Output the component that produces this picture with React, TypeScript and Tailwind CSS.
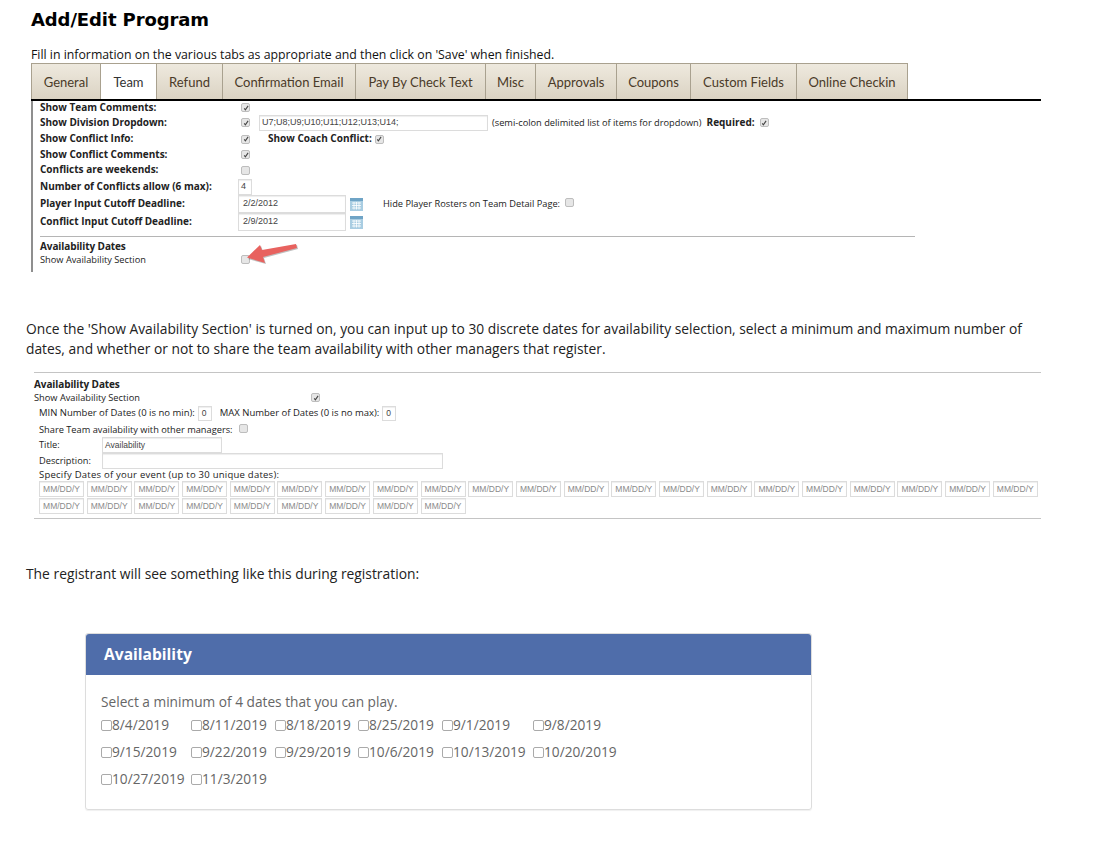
const tabs = [
  { name: "General", w: "w-[70px]" },
  { name: "Team", w: "w-[56px]", active: true },
  { name: "Refund", w: "w-[66px]" },
  { name: "Confirmation Email", w: "w-[133px]" },
  { name: "Pay By Check Text", w: "w-[130px]" },
  { name: "Misc", w: "w-[50px]" },
  { name: "Approvals", w: "w-[81px]" },
  { name: "Coupons", w: "w-[74px]" },
  { name: "Custom Fields", w: "w-[106px]" },
  { name: "Online Checkin", w: "w-[111px]" },
]

const dates = [
  ["8/4/2019", "8/11/2019", "8/18/2019", "8/25/2019", "9/1/2019", "9/8/2019"],
  ["9/15/2019", "9/22/2019", "9/29/2019", "10/6/2019", "10/13/2019", "10/20/2019"],
  ["10/27/2019", "11/3/2019"],
]

const Check = ({ on }: { on?: boolean }) => (
  <span className="inline-flex w-[9px] h-[9px] shrink-0 items-center justify-center rounded-[2px] border border-[#bdbdbd] bg-[#e6e6e6]">
    {on && (
      <svg viewBox="0 0 10 10" className="w-[6px] h-[6px]">
        <path d="M2 5.5 L4 8 L8.5 1.5" fill="none" stroke="#444" strokeWidth="1.8" />
      </svg>
    )}
  </span>
)

const Box = ({ value, className }: { value?: string; className: string }) => (
  <div className={"flex items-center border border-[#dcdcdc] shadow-[inset_0_1px_1px_#eeeeee] font-['Liberation_Sans',sans-serif] " + className}>
    {value}
  </div>
)

const Calendar = () => (
  <svg viewBox="0 0 13 13" className="w-[13px] h-[13px] ml-1 shrink-0">
    <rect width="13" height="13" fill="#a9cde2" />
    <rect x="0" y="0" width="13" height="3" fill="#6fa4c6" />
    <path d="M2 5h9M2 7.5h9M2 10h9M4 4v7.5M6.5 4v7.5M9 4v7.5" stroke="#ffffff" strokeWidth="0.8" fill="none" />
  </svg>
)

const Row = ({ label, h, children }: { label: string; h: string; children?: React.ReactNode }) => (
  <div className={"flex items-center " + h}>
    <div className="w-[201px] shrink-0 pb-[1px] font-bold text-[10px]">{label}</div>
    {children}
  </div>
)

export default function App() {
  return (
    <div className="w-[1100px] h-[846px] overflow-hidden bg-white text-black font-['Open_Sans',sans-serif]">
      {/* first screenshot: team tab */}
      <div className="pl-[31px]">
        <h1 className="pt-[8px] h-[47px] text-[18px] leading-[24px] font-bold font-['DejaVu_Sans',sans-serif] tracking-[-0.1px]">Add/Edit Program</h1>
        <p className="h-[16px] text-[12.3px] leading-[16px] text-[#111]">Fill in information on the various tabs as appropriate and then click on 'Save' when finished.</p>
        <div className="flex w-[1010px] h-[38px] border-b-2 border-black">
          {tabs.map((t) => (
            <div
              key={t.name}
              className={
                t.w +
                " flex items-center justify-center pt-[2px] border-r border-t border-[#a9a18f] font-['Lato',sans-serif] text-[13px] " +
                (t.active ? "bg-white text-[#333]" : "bg-gradient-to-b from-[#eee9de] to-[#dbd3c3] text-[#4a3a28]") +
                (t.name === "General" ? " border-l" : "")
              }
            >
              {t.name}
            </div>
          ))}
        </div>
        <div className="relative h-[171px] border-l-2 border-[#8f8f8f] pl-[7px] text-[9.25px] text-[#222]">
          <Row label="Show Team Comments:" h="h-[13px]"><Check on /></Row>
          <Row label="Show Division Dropdown:" h="h-[17px]">
            <Check on />
            <Box value="U7;U8;U9;U10;U11;U12;U13;U14;" className="ml-[9px] w-[229px] h-[16px] pl-[2px] text-[9px] text-[#444]" />
            <span className="ml-[4px]">(semi-colon delimited list of items for dropdown)</span>
            <span className="ml-[5px] font-bold text-[10px]">Required:</span>
            <span className="ml-[5px]"><Check on /></span>
          </Row>
          <Row label="Show Conflict Info:" h="h-[16px]">
            <Check on />
            <span className="ml-[18px] pb-[1px] font-bold text-[10px]">Show Coach Conflict:</span>
            <span className="ml-[3px]"><Check on /></span>
          </Row>
          <Row label="Show Conflict Comments:" h="h-[15px]"><Check on /></Row>
          <Row label="Conflicts are weekends:" h="h-[16px]"><Check /></Row>
          <Row label="Number of Conflicts allow (6 max):" h="h-[17px]">
            <Box value="4" className="-ml-[3px] w-[14px] h-[16px] pl-[2px] text-[9px] text-[#444]" />
          </Row>
          <Row label="Player Input Cutoff Deadline:" h="h-[18px]">
            <Box value="2/2/2012" className="-ml-[3px] w-[108px] h-[18px] pl-[4px] text-[9px] text-[#444]" />
            <Calendar />
            <span className="ml-[20px]">Hide Player Rosters on Team Detail Page:</span>
            <span className="ml-[5px]"><Check /></span>
          </Row>
          <Row label="Conflict Input Cutoff Deadline:" h="h-[18px]">
            <Box value="2/9/2012" className="-ml-[3px] w-[108px] h-[18px] pl-[4px] text-[9px] text-[#444]" />
            <Calendar />
          </Row>
          <div className="mt-[5px] w-[875px] border-t border-[#b5b5b5]" />
          <div className="pt-[3px] h-[16px] font-bold text-[10px] tracking-[-0.1px] leading-[12px]">Availability Dates</div>
          <div className="flex items-center h-[13px]">
            <span className="w-[201px]">Show Availability Section</span>
            <Check />
          </div>
          {/* red arrow on the checkbox */}
          <svg viewBox="0 0 60 28" className="absolute left-[207px] top-[139px] w-[60px] h-[28px]">
            <path d="M8 19 L21 6 L23 11 L57 5 L58 9 L24 18 L26 24 Z" fill="#00000040" />
            <path d="M7 17.5 L20 5 L22 10 L56 4 L57 8 L23 17 L25 23 Z" fill="#e8625f" />
          </svg>
        </div>
      </div>

      <p className="pl-[26px] pt-[47px] h-[100px] w-[1040px] text-[13.8px] leading-[20px] text-[#222]">
        Once the 'Show Availability Section' is turned on, you can input up to 30 discrete dates for availability selection, select a minimum and maximum number of dates, and whether or not to share the team availability with other managers that register.
      </p>

      {/* second screenshot: availability settings */}
      <div className="ml-[34px] w-[1007px] h-[147px] border-y border-[#c4c4c4] text-[9.25px] text-[#222]">
        <div className="pt-[5px] h-[18px] font-bold text-[10px] tracking-[-0.1px] leading-[12px]">Availability Dates</div>
        <div className="flex items-center h-[13px]">
          <span className="w-[277px]">Show Availability Section</span>
          <Check on />
        </div>
        <div className="flex items-center h-[18px] pt-[1px] pl-[5px] text-[9.5px]">
          <span>MIN Number of Dates (0 is no min):</span>
          <Box value="0" className="ml-[3px] w-[14px] h-[15px] pl-[3px] text-[8.5px] text-[#444]" />
          <span className="ml-[8px]">MAX Number of Dates (0 is no max):</span>
          <Box value="0" className="ml-[3px] w-[14px] h-[15px] pl-[3px] text-[8.5px] text-[#444]" />
        </div>
        <div className="flex items-center h-[15px] pl-[5px]">
          <span>Share Team availability with other managers:</span>
          <span className="ml-[6px]"><Check /></span>
        </div>
        <div className="flex items-center h-[16px] pl-[5px]">
          <span className="w-[63px]">Title:</span>
          <Box value="Availability" className="w-[120px] h-[16px] pl-[2px] text-[8.5px] text-[#444]" />
        </div>
        <div className="flex items-center h-[16px] pl-[5px]">
          <span className="w-[63px]">Description:</span>
          <Box className="w-[341px] h-[16px]" />
        </div>
        <div className="h-[12px] leading-[12px] pl-[5px] text-[9.5px] tracking-[0.24px]">Specify Dates of your event (up to 30 unique dates):</div>
        <div className="flex flex-wrap w-[1003px] ml-[5px] gap-x-[2.7px] gap-y-[1px]">
          {Array.from({ length: 30 }).map((_, i) => (
            <Box key={i} value="MM/DD/Y" className="w-[45px] h-[16px] justify-center text-[8.5px] text-[#8a8a8a]" />
          ))}
        </div>
      </div>

      <p className="pl-[26px] pt-[45px] h-[114px] text-[13.85px] leading-[20px] text-[#222]">The registrant will see something like this during registration:</p>

      {/* third screenshot: what the registrant sees */}
      <div className="ml-[85px] w-[727px] h-[177px] rounded-[3px] border border-[#dddddd] shadow-[0_1px_1px_#00000010]">
        <div className="flex items-center h-[41px] pl-[18px] bg-[#4f6daa] rounded-t-[3px] text-white text-[15.6px] font-bold">Availability</div>
        <div className="pl-[15px] pt-[17px] text-[13.7px] text-[#666]">
          <div className="h-[24px] leading-[20px]">Select a minimum of 4 dates that you can play.</div>
          <div className="grid grid-cols-[90px_84px_83px_84px_91px_auto] auto-rows-[27px] justify-start">
            {dates.flat().map((d) => (
              <div key={d} className="flex items-center h-[18px]">
                <span className="w-[11px] h-[11px] mt-[1px] rounded-[2px] border border-[#aaaaaa] bg-white" />
                <span>{d}</span>
              </div>
            ))}
          </div>
        </div>
      </div>
    </div>
  )
}
